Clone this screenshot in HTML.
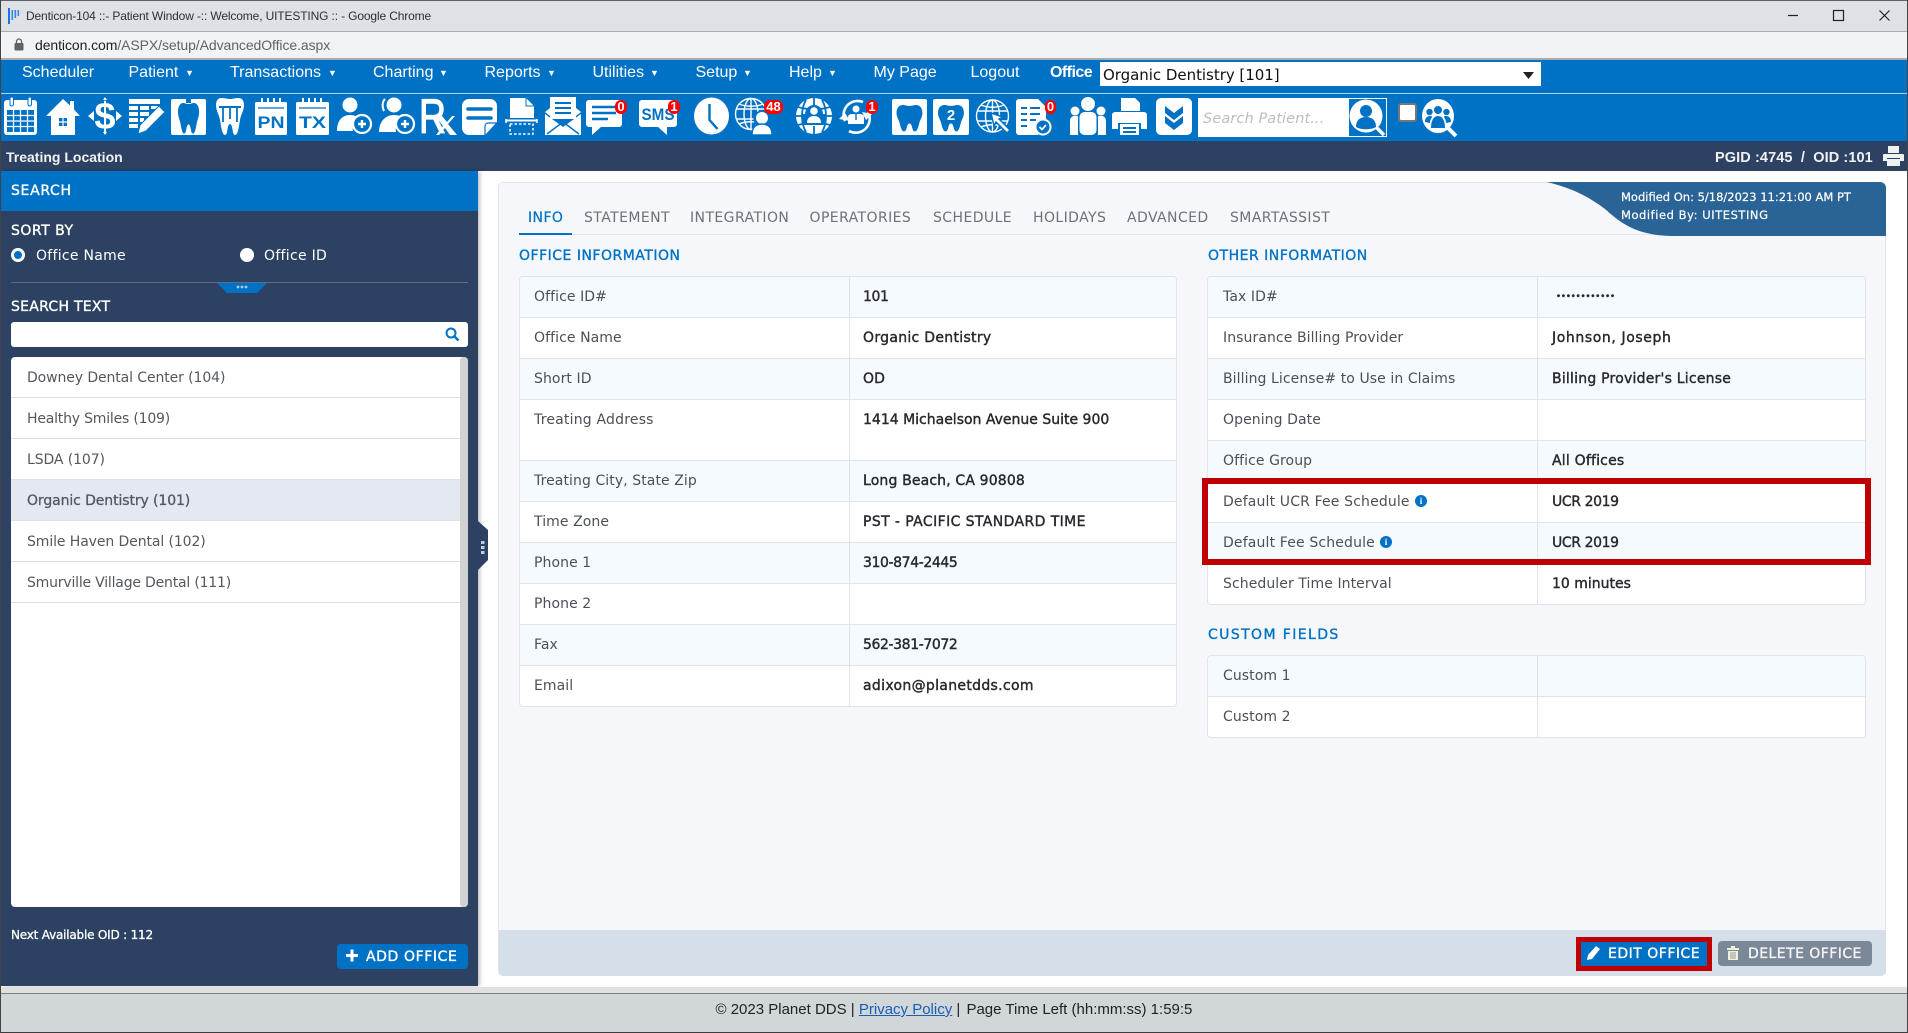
<!DOCTYPE html>
<html lang="en"><head><meta charset="utf-8"><title>Denticon</title>
<style>
html,body{margin:0;padding:0;width:1908px;height:1033px;overflow:hidden;background:#fff}
body{position:relative;font-family:"DejaVu Sans","Liberation Sans",sans-serif}
.a{position:absolute}
.t{position:absolute;white-space:nowrap;line-height:20px;height:20px}
.n{font:16px/20px "Liberation Sans",sans-serif;color:#fff;top:63px}
.r{font:9px/20px "Liberation Sans",sans-serif;color:#fff;top:63px}
.tab{font-size:14px;color:#6c727b;top:208px;letter-spacing:.42px}
.h{font-size:14px;color:#0072c6;-webkit-text-stroke:.35px #0072c6;letter-spacing:.5px}
.sh{font-size:14px;color:#fff;-webkit-text-stroke:.35px #fff}
.tb{position:absolute;background:#fff;border:1px solid #dfe3ec;border-radius:4px;box-sizing:border-box;overflow:hidden}
.row{height:41px;box-sizing:border-box;border-bottom:1px solid #dfe3ec;display:flex;background:#fff;font-size:14px;line-height:20px}
.row:nth-child(odd){background:#f5faff}
.row:last-child{border-bottom:0}
.row>div{padding-top:10px;box-sizing:border-box;white-space:nowrap}
.l{border-right:1px solid #dfe3ec;color:#4b5058;letter-spacing:.08px}
.v{color:#26292e;-webkit-text-stroke:.4px #26292e;letter-spacing:.15px}
.d{letter-spacing:-.4px}
.li{position:absolute;left:0;width:449px;height:41px;box-sizing:border-box;border-bottom:1px solid #dde0e5;padding:11px 0 0 16px;font-size:14px;line-height:20px;color:#53585f;letter-spacing:-.1px}
.bd{position:absolute;background:#f00;color:#fff;border-radius:6px;font:bold 13px/14px "Liberation Sans",sans-serif;text-align:center;height:14px}
.i{font:bold 9px/12px "Liberation Serif",serif;position:absolute;width:12px;height:12px;border-radius:50%;background:#0072c6;color:#fff;text-align:center}
</style></head><body>

<!-- browser chrome -->
<div class="a" style="left:0;top:0;width:1908px;height:31px;background:#dee1e6;border-top:1px solid #5f6164;box-sizing:border-box"></div>
<div class="a" style="left:0;top:31px;width:1908px;height:28px;background:#f1f3f4;border-top:1px solid #a9acaf;box-sizing:border-box"></div>
<div class="a" style="left:0;top:58px;width:1908px;height:2px;background:#a9acaf"></div>
<svg class="a" style="left:8px;top:8px" width="12" height="16"><rect x="0" y="0" width="2" height="16" fill="#1a73e8"/><rect x="3.500" y="2" width="1.600" height="10" fill="#3a86d8"/><rect x="6.500" y="2" width="1.600" height="8" fill="#3a86d8"/><rect x="9.500" y="2" width="1.600" height="6" fill="#3a86d8"/></svg>
<div class="t" style="left:26px;top:6px;font:12px/20px 'Liberation Sans',sans-serif;color:#2d2f33;letter-spacing:-.14px">Denticon-104 ::- Patient Window -:: Welcome, UITESTING :: - Google Chrome</div>
<svg class="a" style="left:14px;top:38px" width="10" height="13"><rect x="0.500" y="5" width="9" height="7.500" rx="1" fill="#5f6368"/><path d="M2.500 5V3.500a2.500 2.500 0 0 1 5 0V5" fill="none" stroke="#5f6368" stroke-width="1.300"/></svg>
<div class="t" style="left:35px;top:35px;font:14px/20px 'Liberation Sans',sans-serif;color:#5f6368;letter-spacing:-.08px"><span style="color:#202124">denticon.com</span>/ASPX/setup/AdvancedOffice.aspx</div>
<svg class="a" style="left:1780px;top:6px" width="120" height="20" fill="none" stroke="#222" stroke-width="1.200"><path d="M8 9.500h10"/><rect x="53.500" y="4.500" width="10" height="10"/><path d="M99.500 4.500l10 10M109.500 4.500l-10 10"/></svg>

<!-- nav -->
<div class="a" style="left:0;top:60px;width:1908px;height:81px;background:#0072c6"></div>
<div class="a" style="left:0;top:93px;width:1908px;height:1px;background:#b3d3ec"></div>
<div class="t n" style="left:22px">Scheduler</div>
<div class="t n" style="left:128.500px">Patient</div><div class="t r" style="left:185px">▼</div>
<div class="t n" style="left:230px">Transactions</div><div class="t r" style="left:328px">▼</div>
<div class="t n" style="left:373px">Charting</div><div class="t r" style="left:439px">▼</div>
<div class="t n" style="left:484.500px">Reports</div><div class="t r" style="left:547px">▼</div>
<div class="t n" style="left:592.500px">Utilities</div><div class="t r" style="left:650px">▼</div>
<div class="t n" style="left:695.500px">Setup</div><div class="t r" style="left:743px">▼</div>
<div class="t n" style="left:789px">Help</div><div class="t r" style="left:828px">▼</div>
<div class="t n" style="left:873.500px">My Page</div>
<div class="t n" style="left:970.500px">Logout</div>
<div class="t n" style="left:1050px;font-weight:bold;letter-spacing:-.55px">Office</div>
<div class="a" style="left:1100px;top:62px;width:441px;height:24px;background:#fff"></div>
<div class="t" style="left:1103px;top:65px;font:15px/20px 'DejaVu Sans',sans-serif;color:#111;letter-spacing:-.03px">Organic Dentistry [101]</div>
<svg class="a" style="left:1523px;top:72px" width="12" height="8"><path d="M0 0h11L5.500 7z" fill="#222"/></svg>

<!-- toolbar icons -->
<svg class="a" style="left:0;top:97px" width="1470" height="42" fill="#fff" font-family="Liberation Sans,sans-serif">
<!-- calendar -->
<g transform="translate(4,0)"><rect x="0" y="3" width="33" height="35" rx="3"/><rect x="3" y="13" width="27" height="22" fill="#0072c6"/><path d="M9.500 13v22M16.500 13v22M23.500 13v22M3 18.500h27M3 24h27M3 29.500h27" stroke="#fff" stroke-width="1.300"/><rect x="6" y="0" width="3.500" height="9" rx="1.700" stroke="#0072c6" stroke-width="1"/><rect x="24" y="0" width="3.500" height="9" rx="1.700" stroke="#0072c6" stroke-width="1"/></g>
<!-- home -->
<g transform="translate(46,0)"><path d="M17 2L24 8.500V4h4v8.500L34 19h-5v19H5V19H0z"/><path d="M13 21h8v8h-8z" fill="#0072c6"/><path d="M17 21v8M13 25h8" stroke="#fff" stroke-width="1.200"/></g>
<!-- dollar -->
<g transform="translate(88,0)"><text x="17" y="32" text-anchor="middle" font-size="38" font-weight="bold">$</text><path d="M0 19l6-5v10zM34 19l-6-5v10zM17 0l-2 3h4zM17 38l-2-3h4z"/></g>
<!-- edit table -->
<g transform="translate(129,0)"><path d="M0 2h31v5H0zM0 9h9v4H0zM11 9h9v4h-9zM22 9h9v3h-9zM0 15h9v4H0zM11 15h9v4h-9zM0 21h9v4H0zM11 21h4v4h-4zM0 27h9v4H0z"/><path d="M30 9l6 6-19 19-8 3 2-9z" stroke="#0072c6" stroke-width="1"/></g>
<!-- tooth box -->
<g transform="translate(171,0)"><path d="M2 2h13v4h5V2h13a2 2 0 0 1 2 2v32a2 2 0 0 1-2 2H2a2 2 0 0 1-2-2V4a2 2 0 0 1 2-2z"/><path transform="translate(7,6) scale(.88,1.020)" d="M6 0C2 0 0 4 0 9c0 5 2 7 3 12 1 5 2 9 4 9 3 0 2-9 5-9s2 9 5 9c2 0 3-4 4-9 1-5 3-7 3-12 0-5-2-9-6-9-2 0-3 1-6 1S8 0 6 0z" fill="#0072c6"/></g>
<!-- crown tooth -->
<g transform="translate(216,0)"><path d="M5 1c4 0 6 1 9 1s5-1 9-1c3 0 5 3 5 7 0 6-3 9-4 15-1 6-2 15-5 15-3 0-2-11-5-11s-2 11-5 11c-3 0-4-9-5-15C3 17 0 14 0 8c0-4 2-7 5-7z"/><path d="M3 10h22" stroke="#0072c6" stroke-width="2"/><path d="M7 11v14M14 11v11M21 11v14" stroke="#0072c6" stroke-width="1.800"/></g>
<!-- PN -->
<g transform="translate(255,0)"><rect x="0" y="5" width="32" height="33" rx="1.500"/><path d="M7 1v9M13 1v9M19 1v9M25 1v9" stroke="#fff" stroke-width="2"/><path d="M3 11h26" stroke="#0072c6" stroke-width="1.200"/><text x="16" y="31" text-anchor="middle" font-size="17" font-weight="bold" fill="#0072c6" textLength="27" lengthAdjust="spacingAndGlyphs">PN</text></g>
<!-- TX -->
<g transform="translate(296,0)"><rect x="0" y="5" width="33" height="33" rx="1.500"/><path d="M7 1v9M13 1v9M19 1v9M25 1v9" stroke="#fff" stroke-width="2"/><path d="M3 11h27" stroke="#0072c6" stroke-width="1.200"/><text x="16.500" y="31" text-anchor="middle" font-size="17" font-weight="bold" fill="#0072c6" textLength="27" lengthAdjust="spacingAndGlyphs">TX</text></g>
<!-- user plus -->
<g transform="translate(337,0)"><circle cx="13" cy="8" r="7.500"/><path d="M0 34c0-10 5-16 13-16 5 0 8 2 10 4-6 3-8 7-7 12z"/><circle cx="25" cy="27" r="9" fill="#0072c6" stroke="#fff" stroke-width="2.200"/><path d="M21 27h8M25 23v8" stroke="#fff" stroke-width="2.400"/></g>
<g transform="translate(379,0)"><circle cx="15" cy="8" r="7.500"/><path d="M6 2c-3 3-3 8-1 12" fill="none" stroke="#fff" stroke-width="2"/><path d="M0 35c0-10 6-17 15-17 4 0 7 1 9 4-6 3-8 7-7 13z"/><circle cx="26" cy="27" r="9" fill="#0072c6" stroke="#fff" stroke-width="2.200"/><path d="M22 27h8M26 23v8" stroke="#fff" stroke-width="2.400"/></g>
<!-- Rx -->
<g transform="translate(421,0)"><text x="-2" y="36" font-size="48" textLength="27" lengthAdjust="spacingAndGlyphs" stroke="#fff" stroke-width="1.200">R</text><path d="M14 19h7l5 6 5-6h3l-7 8 9 11h-7l-5-7-6 7h-3l7-9z"/></g>
<!-- note -->
<g transform="translate(462,0)"><path d="M7 2h21a7 7 0 0 1 7 7v16L23 38H7a7 7 0 0 1-7-7V9a7 7 0 0 1 7-7z"/><path d="M6 12h23M6 21h23" stroke="#0072c6" stroke-width="3.500" stroke-linecap="round"/><path d="M23 38V29a3 3 0 0 1 3-3h9" fill="none" stroke="#0072c6" stroke-width="1.200"/></g>
<!-- scan -->
<g transform="translate(506,0)"><path d="M4 1h16l8 8v12H4z"/><path d="M20 1v8h8" fill="none" stroke="#0072c6" stroke-width="1"/><path d="M0 23.500h31" stroke="#fff" stroke-width="2"/><path d="M0 22v4M31 22v4" stroke="#fff" stroke-width="1.500"/><rect x="4" y="27" width="23" height="10" fill="none" stroke="#fff" stroke-width="1.500" stroke-dasharray="2.500 2"/></g>
<!-- mail -->
<g transform="translate(545,0)"><path d="M5 0h26v22H5z"/><path d="M10 6h16M10 11h16M10 16h16" stroke="#0072c6" stroke-width="2"/><path d="M0 17l18 13 18-13v21H0z"/><path d="M2 37l16-12 16 12" fill="none" stroke="#0072c6" stroke-width="1.500"/><path d="M0 15l5-4v8zM36 15l-5-4v8z"/></g>
<!-- chat -->
<g transform="translate(586,0)"><path d="M3 3h30a3 3 0 0 1 3 3v21a3 3 0 0 1-3 3H15L6 38v-8H3a3 3 0 0 1-3-3V6a3 3 0 0 1 3-3z"/><path d="M6 10h24M6 16h24M6 22h16" stroke="#0072c6" stroke-width="2.400"/></g>
<!-- sms -->
<g transform="translate(639,0)"><path d="M3 3h32a3 3 0 0 1 3 3v21a3 3 0 0 1-3 3h-7v8l-9-8H3a3 3 0 0 1-3-3V6a3 3 0 0 1 3-3z"/><text x="19" y="23" text-anchor="middle" font-size="17" font-weight="bold" fill="#0072c6" textLength="33" lengthAdjust="spacingAndGlyphs">SMS</text></g>
<!-- clock -->
<g transform="translate(694,0)"><ellipse cx="17.500" cy="19" rx="17.500" ry="18.500"/><path d="M15.500 7v16l8 9" fill="none" stroke="#0072c6" stroke-width="2.400"/></g>
<!-- globe user -->
<g transform="translate(735,0)" fill="none" stroke="#fff" stroke-width="1.400"><circle cx="16" cy="17" r="15.500"/><ellipse cx="16" cy="17" rx="7" ry="15.500"/><path d="M16 1.500v31M1 12h30M1 22h30"/><path d="M4 7c7 3 17 3 24 0M4 27c7-3 17-3 24 0"/><circle cx="27" cy="22" r="8.500" fill="#0072c6" stroke="none"/><circle cx="27" cy="21" r="6" fill="#fff" stroke="none"/><path d="M17 38c0-8 4-11 10-11s10 3 10 11z" fill="#fff" stroke="#0072c6"/></g>
<!-- globe person -->
<g transform="translate(796,0)"><circle cx="18" cy="19" r="18"/><path d="M2 10c10 3 22 3 32 0M0 19h36M2 28c10-3 22-3 32 0M18 1v8M18 29v9M10 3C7 8 6 13 6 19s1 11 4 16M26 3c3 5 4 10 4 16s-1 11-4 16" fill="none" stroke="#0072c6" stroke-width="1.800"/><circle cx="18" cy="17" r="9" fill="#0072c6"/><rect x="6" y="17" width="24" height="11" fill="#0072c6"/><circle cx="18" cy="14" r="3.800"/><path d="M11 26c0-5 3-7 7-7s7 2 7 7z"/></g>
<!-- refresh user -->
<g transform="translate(839,0)"><path d="M6 24A14 14 0 0 1 24 5M29 15A14 14 0 0 1 10 34" fill="none" stroke="#fff" stroke-width="2.600"/><path d="M0 22l6-6 5 8zM33 17l-6 6-4-8z"/><circle cx="17" cy="12" r="3.500"/><path d="M9 27v-7c0-2 2-3 4-3h8c2 0 4 1 4 3v7z"/><path d="M17 17v6" stroke="#0072c6" stroke-width="1.400"/></g>
<!-- tooth -->
<g transform="translate(892,0)"><rect x="0" y="2" width="35" height="36" rx="2"/><path transform="translate(4.500,8) scale(1.080,.88)" d="M6 0C2 0 0 4 0 9c0 5 2 7 3 12 1 5 2 9 4 9 3 0 2-9 5-9s2 9 5 9c2 0 3-4 4-9 1-5 3-7 3-12 0-5-2-9-6-9-2 0-3 1-6 1S8 0 6 0z" fill="#0072c6"/></g>
<g transform="translate(933,0)"><rect x="0" y="2" width="36" height="36" rx="2"/><path transform="translate(5,8) scale(1.080,.88)" d="M6 0C2 0 0 4 0 9c0 5 2 7 3 12 1 5 2 9 4 9 3 0 2-9 5-9s2 9 5 9c2 0 3-4 4-9 1-5 3-7 3-12 0-5-2-9-6-9-2 0-3 1-6 1S8 0 6 0z" fill="#0072c6"/><text x="18" y="23" text-anchor="middle" font-size="15" font-weight="bold">2</text></g>
<!-- globe cursor -->
<g transform="translate(976,0)"><g fill="none" stroke="#fff" stroke-width="1.400"><circle cx="16.500" cy="19" r="16"/><ellipse cx="16.500" cy="19" rx="7" ry="16"/><path d="M16.500 3v32M1 14h31M1 24h31"/><path d="M5 8c7 3 16 3 23 0M5 30c7-3 16-3 23 0"/></g><path d="M15 16l12 4-4 2 11 11-3 3-11-11-2 4z" stroke="#0072c6" stroke-width="1.500"/></g>
<!-- doc check -->
<g transform="translate(1016,0)"><path d="M3 2h19l8 8v17l-8 11H3a3 3 0 0 1-3-3V5a3 3 0 0 1 3-3z"/><path d="M5 11h6M14 11h10M5 17h6M14 17h10M5 23h6M14 23h6M5 29h6" stroke="#0072c6" stroke-width="2"/><circle cx="27" cy="30" r="7.500" fill="#0072c6" stroke="#fff" stroke-width="2"/><path d="M23.500 30l2.500 2.500 4-4.500" fill="none" stroke="#fff" stroke-width="1.800"/></g>
<!-- people -->
<g transform="translate(1070,0)"><circle cx="18" cy="7" r="7"/><circle cx="5" cy="14" r="4.500"/><circle cx="31" cy="14" r="4.500"/><rect x="9.500" y="15" width="17" height="23" rx="5"/><path d="M0 38V24c0-3 2-5 4-5h4v19zM36 38V24c0-3-2-5-4-5h-4v19z"/></g>
<!-- printer -->
<g transform="translate(1112,0)"><path d="M9 1h14l5 5v8H9z"/><path d="M3 15h29a3 3 0 0 1 3 3v14h-6v-6H6v6H0V18a3 3 0 0 1 3-3z"/><rect x="8" y="27" width="19" height="11"/><path d="M11 31h13M11 35h13" stroke="#0072c6" stroke-width="2"/></g>
<!-- chevrons -->
<g transform="translate(1156,0)"><rect x="0" y="1" width="36" height="37" rx="5"/><path d="M9 9l9 7 9-7v7l-9 7-9-7zM9 19l9 7 9-7v7l-9 7-9-7z" fill="#0072c6"/></g>
<!-- group search -->
<g transform="translate(1422,0)"><ellipse cx="16" cy="19" rx="16" ry="17"/><path d="M26 31l8 8" stroke="#fff" stroke-width="4"/><g fill="#0072c6"><circle cx="16" cy="13" r="4"/><circle cx="7.500" cy="15" r="3.200"/><circle cx="24.500" cy="15" r="3.200"/><path d="M9 31c0-8 3-12 7-12s7 4 7 12z"/><path d="M3 25c0-4 2-6 5-6 1 0 2 0 2 1-1 2-2 3-2 6zM29 25c0-4-2-6-5-6-1 0-2 0-2 1 1 2 2 3 2 6z"/></g></g>
</svg>
<div class="bd" style="left:615px;top:100px;width:12px">0</div>
<div class="bd" style="left:668px;top:100px;width:12px">1</div>
<div class="bd" style="left:764px;top:100px;width:19px">48</div>
<div class="bd" style="left:866px;top:100px;width:12px">1</div>
<div class="bd" style="left:1045px;top:100px;width:11px">0</div>

<div class="a" style="left:1198px;top:98px;width:189px;height:39px;background:#fff"></div>
<div class="t" style="left:1203px;top:109px;font:italic 14.500px/20px 'DejaVu Sans',sans-serif;color:#bdbdbd;letter-spacing:.1px">Search Patient...</div>
<svg class="a" style="left:1349px;top:99px" width="37" height="37"><rect width="37" height="37" fill="#0072c6"/><ellipse cx="17" cy="17" rx="16.500" ry="16.500" fill="#fff"/><path d="M27 28l8 8" stroke="#fff" stroke-width="3.500"/><circle cx="17" cy="12" r="6" fill="#0072c6"/><path d="M7 28c0-7 4-10 10-10s10 3 10 10c-5 3-15 3-20 0z" fill="#0072c6"/></svg>
<div class="a" style="left:1398px;top:103px;width:19px;height:19px;background:#fff;border:2px solid #767676;border-radius:3px;box-sizing:border-box"></div>

<!-- dark bar -->
<div class="a" style="left:0;top:141px;width:1908px;height:30px;background:#2d4262"></div>
<div class="t" style="left:6px;top:147px;font:bold 14px/20px 'Liberation Sans',sans-serif;color:#f1f1f1">Treating Location</div>
<div class="t" style="left:1715px;top:148px;font:bold 14.500px/20px 'Liberation Sans',sans-serif;color:#f1f1f1;letter-spacing:.1px">PGID :4745 &nbsp;/&nbsp; OID :101</div>
<svg class="a" style="left:1883px;top:146px" width="21" height="20" fill="#f1f1f1"><rect x="5" y="0" width="11" height="7"/><path d="M1 8h19a1 1 0 0 1 1 1v6h-4v-3H4v3H0V9a1 1 0 0 1 1-1z"/><rect x="4" y="13" width="13" height="7"/></svg>

<!-- sidebar -->
<div class="a" style="left:1px;top:171px;width:477px;height:815px;background:#2d4262;box-shadow:2px 0 4px rgba(0,0,0,.25)"></div>
<div class="a" style="left:1px;top:171px;width:477px;height:40px;background:#0072c6"></div>
<div class="t sh" style="left:11px;top:181px;letter-spacing:.67px">SEARCH</div>
<div class="t sh" style="left:11px;top:221px;letter-spacing:.5px">SORT BY</div>
<div class="a" style="left:11px;top:248px;width:14px;height:14px;border-radius:50%;background:#0072c6;border:3.500px solid #fff;box-sizing:border-box"></div>
<div class="t" style="left:36px;top:246px;font-size:14px;color:#fff;letter-spacing:.28px">Office Name</div>
<div class="a" style="left:240px;top:248px;width:14px;height:14px;border-radius:50%;background:#fff"></div>
<div class="t" style="left:264px;top:246px;font-size:14px;color:#fff;letter-spacing:.3px">Office ID</div>
<div class="a" style="left:11px;top:282px;width:457px;height:1px;background:#5b6d88"></div>
<svg class="a" style="left:217px;top:282px" width="50" height="11"><path d="M0 1h50l-10 10H10z" fill="#0072c6"/><circle cx="21" cy="5" r="1.400" fill="#b9c6d6"/><circle cx="25" cy="5" r="1.400" fill="#b9c6d6"/><circle cx="29" cy="5" r="1.400" fill="#b9c6d6"/></svg>
<div class="t sh" style="left:11px;top:297px;letter-spacing:.27px">SEARCH TEXT</div>
<div class="a" style="left:11px;top:322px;width:457px;height:25px;background:#fff;border-radius:3px"></div>
<svg class="a" style="left:445px;top:327px" width="15" height="15" fill="none" stroke="#0072c6"><circle cx="6" cy="6" r="4.500" stroke-width="2"/><path d="M9.500 9.500l4 4" stroke-width="2.400"/></svg>
<div class="a" style="left:11px;top:357px;width:457px;height:550px;background:#fff;border-radius:4px;overflow:hidden">
  <div class="li" style="top:0">Downey Dental Center (104)</div>
  <div class="li" style="top:41px;letter-spacing:-.2px">Healthy Smiles (109)</div>
  <div class="li" style="top:82px">LSDA (107)</div>
  <div class="li" style="top:123px;background:#e4e8ef;-webkit-text-stroke:.3px #53585f">Organic Dentistry (101)</div>
  <div class="li" style="top:164px">Smile Haven Dental (102)</div>
  <div class="li" style="top:205px;letter-spacing:-.2px">Smurville Village Dental (111)</div>
  <div class="a" style="left:449px;top:0;width:8px;height:550px;background:#d2d2d2;border-radius:3px"></div>
</div>
<div class="t" style="left:11px;top:925px;font-size:12px;color:#fff;-webkit-text-stroke:.3px #fff;letter-spacing:-.2px">Next Available OID : 112</div>
<div class="a" style="left:337px;top:944px;width:131px;height:25px;background:#0072c6;border-radius:4px"></div>
<svg class="a" style="left:346px;top:949px" width="13" height="13"><path d="M0 6.500h12M6 .5v12" stroke="#fff" stroke-width="3"/></svg>
<div class="t" style="left:366px;top:947px;font-size:14px;color:#fff;-webkit-text-stroke:.35px #fff;letter-spacing:.6px">ADD OFFICE</div>
<svg class="a" style="left:478px;top:521px" width="10" height="49"><path d="M0 0l10 9v30L0 49z" fill="#2d4262"/><rect x="3" y="20" width="3.500" height="3" fill="#c3ccd8"/><rect x="3" y="25" width="3.500" height="3" fill="#c3ccd8"/><rect x="3" y="30" width="3.500" height="3" fill="#c3ccd8"/></svg>

<!-- panel -->
<div class="a" style="left:498px;top:182px;width:1388px;height:794px;background:#f5f7fa;border:1px solid #dfe3ec;border-radius:5px;box-sizing:border-box"></div>
<div class="a" style="left:519px;top:234px;width:1367px;height:1px;background:#dfe3ec"></div>
<div class="a" style="left:519px;top:233px;width:53px;height:2px;background:#0072c6"></div>
<svg class="a" style="left:1545px;top:182px" width="341" height="55"><path d="M2 0H335a6 6 0 0 1 6 6V54H130C90 54 75 40 60 27 40 12 25 6 2 0z" fill="#2a6396"/></svg>
<div class="t" style="left:1621px;top:187px;font-size:11.500px;color:#fff;letter-spacing:0;-webkit-text-stroke:.2px #fff">Modified On: 5/18/2023 11:21:00 AM PT</div>
<div class="t" style="left:1621px;top:205px;font-size:11.500px;color:#fff;letter-spacing:.55px;-webkit-text-stroke:.2px #fff">Modified By: UITESTING</div>
<div class="t tab" style="left:528px;color:#0072c6;-webkit-text-stroke:.2px #0072c6">INFO</div>
<div class="t tab" style="left:584px">STATEMENT</div>
<div class="t tab" style="left:690px">INTEGRATION</div>
<div class="t tab" style="left:809.500px">OPERATORIES</div>
<div class="t tab" style="left:933px">SCHEDULE</div>
<div class="t tab" style="left:1033px">HOLIDAYS</div>
<div class="t tab" style="left:1127px">ADVANCED</div>
<div class="t tab" style="left:1230px">SMARTASSIST</div>

<div class="t h" style="left:519px;top:246px">OFFICE INFORMATION</div>
<div class="t h" style="left:1208px;top:246px">OTHER INFORMATION</div>
<div class="t h" style="left:1208px;top:625px;letter-spacing:1.4px">CUSTOM FIELDS</div>

<div class="tb" style="left:519px;top:276px;width:658px;height:431px">
  <div class="row"><div class="l" style="width:330px;padding-left:14px">Office ID#</div><div class="v d" style="padding-left:13px">101</div></div>
  <div class="row"><div class="l" style="width:330px;padding-left:14px">Office Name</div><div class="v" style="padding-left:13px;letter-spacing:.3px">Organic Dentistry</div></div>
  <div class="row"><div class="l" style="width:330px;padding-left:14px">Short ID</div><div class="v" style="padding-left:13px">OD</div></div>
  <div class="row" style="height:61px"><div class="l" style="width:330px;padding-left:14px;letter-spacing:.2px">Treating Address</div><div class="v" style="padding-left:13px;letter-spacing:0">1414 Michaelson Avenue Suite 900</div></div>
  <div class="row"><div class="l" style="width:330px;padding-left:14px">Treating City, State Zip</div><div class="v" style="padding-left:13px">Long Beach, CA 90808</div></div>
  <div class="row"><div class="l" style="width:330px;padding-left:14px">Time Zone</div><div class="v" style="padding-left:13px;letter-spacing:.4px">PST - PACIFIC STANDARD TIME</div></div>
  <div class="row"><div class="l" style="width:330px;padding-left:14px">Phone 1</div><div class="v d" style="padding-left:13px">310-874-2445</div></div>
  <div class="row"><div class="l" style="width:330px;padding-left:14px">Phone 2</div><div class="v" style="padding-left:13px"></div></div>
  <div class="row"><div class="l" style="width:330px;padding-left:14px">Fax</div><div class="v d" style="padding-left:13px">562-381-7072</div></div>
  <div class="row"><div class="l" style="width:330px;padding-left:14px">Email</div><div class="v" style="padding-left:13px;letter-spacing:.32px">adixon@planetdds.com</div></div>
</div>

<div class="tb" style="left:1207px;top:276px;width:659px;height:329px">
  <div class="row"><div class="l" style="width:330px;padding-left:15px">Tax ID#</div><div class="v" style="padding-left:18px;font-size:8.500px;letter-spacing:-.1px">••••••••••••</div></div>
  <div class="row"><div class="l" style="width:330px;padding-left:15px">Insurance Billing Provider</div><div class="v" style="padding-left:14px;letter-spacing:.6px">Johnson, Joseph</div></div>
  <div class="row"><div class="l" style="width:330px;padding-left:15px">Billing License# to Use in Claims</div><div class="v" style="padding-left:14px;letter-spacing:.22px">Billing Provider's License</div></div>
  <div class="row"><div class="l" style="width:330px;padding-left:15px">Opening Date</div><div class="v" style="padding-left:14px"></div></div>
  <div class="row"><div class="l" style="width:330px;padding-left:15px">Office Group</div><div class="v" style="padding-left:14px;letter-spacing:.2px">All Offices</div></div>
  <div class="row"><div class="l" style="width:330px;padding-left:15px;letter-spacing:.15px">Default UCR Fee Schedule</div><div class="v d" style="padding-left:14px">UCR 2019</div></div>
  <div class="row"><div class="l" style="width:330px;padding-left:15px;letter-spacing:.15px">Default Fee Schedule</div><div class="v d" style="padding-left:14px">UCR 2019</div></div>
  <div class="row"><div class="l" style="width:330px;padding-left:15px">Scheduler Time Interval</div><div class="v" style="padding-left:14px;letter-spacing:0">10 minutes</div></div>
</div>
<div class="i" style="left:1415px;top:495px">i</div>
<div class="i" style="left:1380px;top:536px">i</div>
<div class="a" style="left:1202px;top:478px;width:669px;height:87px;border:6px solid #c00000;box-sizing:border-box"></div>

<div class="tb" style="left:1207px;top:655px;width:659px;height:83px">
  <div class="row"><div class="l" style="width:330px;padding-left:15px">Custom 1</div><div class="v"></div></div>
  <div class="row"><div class="l" style="width:330px;padding-left:15px">Custom 2</div><div class="v"></div></div>
</div>

<!-- action bar -->
<div class="a" style="left:499px;top:930px;width:1387px;height:46px;background:#d5dfe9;border-radius:0 0 5px 5px"></div>
<div class="a" style="left:1576px;top:937px;width:136px;height:34px;background:#0072c6;border:5.500px solid #c00000;box-sizing:border-box"></div>
<svg class="a" style="left:1587px;top:946px" width="13" height="14"><path d="M9 0l4 3-8 10-5 1 1-5z" fill="#fff"/></svg>
<div class="t" style="left:1608px;top:944px;font-size:14px;color:#fff;-webkit-text-stroke:.35px #fff;letter-spacing:.5px">EDIT OFFICE</div>
<div class="a" style="left:1718px;top:941px;width:154px;height:25px;background:#7b8898;border-radius:4px"></div>
<svg class="a" style="left:1727px;top:946px" width="12" height="14"><path d="M0 2h12v2H0zM4 0h4v2H4zM1 5h10v9H1z" fill="#f2efd8"/><path d="M4 6v7M6 6v7M8 6v7" stroke="#7b8898" stroke-width=".8"/></svg>
<div class="t" style="left:1748px;top:944px;font-size:14px;color:#f4f4f4;-webkit-text-stroke:.35px #f4f4f4;letter-spacing:.45px">DELETE OFFICE</div>

<!-- footer -->
<div class="a" style="left:0;top:987px;width:1908px;height:6px;background:#e0e0e0"></div>
<div class="a" style="left:0;top:993px;width:1908px;height:40px;background:#d1d6d9;border-top:1px solid #7d7f81;border-bottom:1px solid #3c3c3c;box-sizing:border-box"></div>
<div class="t" style="left:715.500px;top:1000px;font:15px/20px 'Liberation Sans',sans-serif;color:#222">© 2023 Planet DDS | <span style="color:#1a5fb4;text-decoration:underline">Privacy Policy</span> | <span style="margin-left:2px">Page Time Left (hh:mm:ss) 1:59:5</span></div>
<div class="a" style="left:0;top:0;width:1px;height:1033px;background:#444"></div>
<div class="a" style="left:1907px;top:0;width:1px;height:1033px;background:#444"></div>
</body></html>
